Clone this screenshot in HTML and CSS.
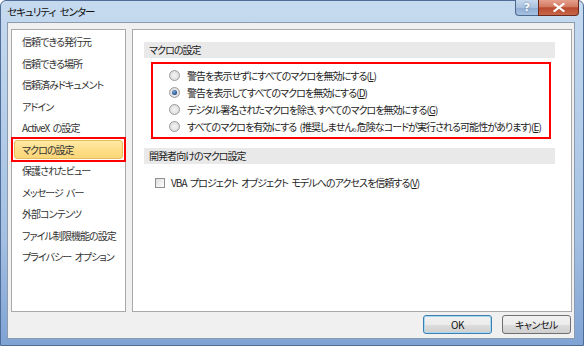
FILE: index.html
```html
<!DOCTYPE html>
<html lang="ja">
<head>
<meta charset="utf-8">
<title>セキュリティ センター</title>
<link rel="stylesheet" href="styles.css">
</head>
<body>
<div class="window">
  <div class="titlebar">
    <span class="title">セキュリティ センター</span>
    <div class="caption-buttons">
      <div class="cap-btn help">?</div>
      <div class="cap-btn close">
        <svg width="12" height="9" viewBox="0 0 12 9"><path d="M1.5 1 L10.5 8 M10.5 1 L1.5 8" stroke="#ffffff" stroke-width="2.2" stroke-linecap="square"/></svg>
      </div>
    </div>
  </div>
  <div class="client">
    <div class="panes">
      <ul class="nav">
        <li class="nav-item">信頼できる発行元</li>
        <li class="nav-item">信頼できる場所</li>
        <li class="nav-item">信頼済みドキュメント</li>
        <li class="nav-item">アドイン</li>
        <li class="nav-item">ActiveX の設定</li>
        <li class="nav-item selected"><span class="sel-bg">マクロの設定</span></li>
        <li class="nav-item">保護されたビュー</li>
        <li class="nav-item">メッセージ バー</li>
        <li class="nav-item">外部コンテンツ</li>
        <li class="nav-item">ファイル制限機能の設定</li>
        <li class="nav-item">プライバシー オプション</li>
      </ul>
      <div class="content">
        <div class="section-header">マクロの設定</div>
        <div class="radio-group">
          <div class="opt"><span class="radio"></span><span>警告を表示せずにすべてのマクロを無効にする(<u>L</u>)</span></div>
          <div class="opt"><span class="radio checked"></span><span>警告を表示してすべてのマクロを無効にする(<u>D</u>)</span></div>
          <div class="opt"><span class="radio"></span><span>デジタル署名されたマクロを除き、すべてのマクロを無効にする(<u>G</u>)</span></div>
          <div class="opt"><span class="radio"></span><span>すべてのマクロを有効にする (推奨しません。危険なコードが実行される可能性があります)(<u>E</u>)</span></div>
        </div>
        <div class="section-header second">開発者向けのマクロ設定</div>
        <div class="check-row"><span class="checkbox"></span><span>VBA プロジェクト オブジェクト モデルへのアクセスを信頼する(<u>V</u>)</span></div>
      </div>
    </div>
    <div class="buttons">
      <div class="btn default">OK</div>
      <div class="btn">キャンセル</div>
    </div>
  </div>
</div>
</body>
</html>
```

FILE: styles.css
```css
* { box-sizing: border-box; }
html, body { margin: 0; padding: 0; }
body {
  width: 584px;
  height: 346px;
  overflow: hidden;
  font-family: "Noto Sans CJK JP", "Noto Sans", sans-serif;
  font-size: 10px;
  letter-spacing: -0.95px;
  word-spacing: 2px;
  font-feature-settings: "palt";
  color: #1e1e1e;
  background: #ffffff;
}
.window {
  width: 584px;
  height: 346px;
  display: flex;
  flex-direction: column;
  background: linear-gradient(180deg, #c6daef 0%, #b7cfea 30%, #a3bfe2 70%, #7fa3d4 100%);
  border: 1px solid #4f6d96;
  border-radius: 6px 6px 0 0;
  padding: 0 8px 6px 6px;
}
.titlebar {
  height: 21px;
  display: flex;
  align-items: flex-start;
  flex-shrink: 0;
}
.title {
  font-size: 10.5px;
  letter-spacing: -1px;
  word-spacing: 3px;
  line-height: 22px;
  color: #111;
}
.caption-buttons {
  margin-left: auto;
  display: flex;
  margin-top: -1px;
  margin-right: -4px;
}
.cap-btn {
  height: 16px;
  display: flex;
  align-items: center;
  justify-content: center;
  border: 1px solid #4d6a8e;
  border-top: none;
  letter-spacing: 0;
}
.help {
  width: 23px;
  border-radius: 0 0 0 4px;
  background: linear-gradient(180deg, #c6d8ec 0%, #a9c2df 50%, #8eabd0 51%, #a6c2e2 100%);
  color: #ffffff;
  font-family: "DejaVu Sans", sans-serif;
  font-weight: bold;
  font-size: 11px;
  text-shadow: 0 0 2px #4a6a94;
  border-right: none;
}
.close {
  width: 41px;
  border-radius: 0 0 4px 0;
  border-color: #6b2a1e;
  background: linear-gradient(180deg, #e6a08d 0%, #d37a62 45%, #b94a2f 52%, #c9684a 100%);
}
.client {
  flex: 1;
  min-height: 0;
  background: #f0f0f0;
  border: 1px solid #8c9bae;
  padding: 6px 2px 0 3px;
  display: flex;
  flex-direction: column;
}
.panes {
  display: flex;
  gap: 6px;
  height: 283px;
}
.nav {
  list-style: none;
  margin: 0;
  width: 115px;
  flex-shrink: 0;
  background: #ffffff;
  border: 1px solid #a9a9a9;
  padding: 1px 0 0 0;
}
.nav-item {
  height: 21.5px;
  line-height: 21.5px;
  padding-left: 10px;
  white-space: nowrap;
  color: #333;
}
.nav-item.selected {
  position: relative;
  padding: 1px 2px;
}
.sel-bg {
  display: block;
  height: 19.5px;
  line-height: 18px;
  padding-left: 7px;
  background: linear-gradient(180deg, #fee9a6 0%, #fddc85 60%, #fbd77a 100%);
  border: 1px solid #e5be5c;
  border-radius: 3px;
}
.nav-item.selected::after {
  content: "";
  position: absolute;
  top: -2px;
  bottom: -2px;
  left: -1px;
  right: -1px;
  border: 2px solid #ff0000;
}
.content {
  flex: 1;
  min-width: 0;
  overflow: hidden;
  background: #ffffff;
  border: 1px solid #a9a9a9;
  padding: 12px 16px 0 11px;
}
.section-header {
  height: 16px;
  line-height: 16px;
  padding-left: 5px;
  background: #e9e9e9;
  color: #222;
}
.section-header.second {
  margin-top: 9px;
}
.radio-group {
  margin: 4px 4px 0 7px;
  height: 77px;
  border: 2px solid #ff0000;
  padding: 3px 0 0 16px;
}
.opt {
  height: 17px;
  display: flex;
  align-items: center;
  gap: 7px;
  white-space: nowrap;
}
.radio {
  width: 11px;
  height: 11px;
  border-radius: 50%;
  border: 1px solid #9a9a9a;
  background: radial-gradient(circle at 50% 50%, #f4f4f4 0%, #e2e2e2 60%, #cfcfcf 100%);
  flex-shrink: 0;
  display: flex;
  align-items: center;
  justify-content: center;
}
.radio.checked::after {
  content: "";
  width: 5px;
  height: 5px;
  border-radius: 50%;
  background: radial-gradient(circle at 40% 35%, #7fa8d8 0%, #2a5a95 60%, #1c3f70 100%);
}
.check-row {
  margin-top: 12px;
  padding-left: 11px;
  height: 13px;
  display: flex;
  align-items: center;
  gap: 6px;
  white-space: nowrap;
}
.checkbox {
  width: 10px;
  height: 10px;
  border: 1px solid #8f8f8f;
  background: linear-gradient(135deg, #dcdcdc 0%, #f2f2f2 60%, #ffffff 100%);
  flex-shrink: 0;
}
.buttons {
  display: flex;
  justify-content: flex-end;
  gap: 10px;
  margin-top: 3px;
  padding-right: 1px;
}
.btn {
  width: 69px;
  height: 19px;
  line-height: 17px;
  text-align: center;
  border: 1px solid #707070;
  border-radius: 3px;
  background: linear-gradient(180deg, #f2f2f2 0%, #ebebeb 50%, #dddddd 51%, #cfcfcf 100%);
  color: #111;
  letter-spacing: -0.5px;
}
.btn.default {
  border-color: #3c7fb1;
  box-shadow: inset 0 0 0 1px #a7d8f2;
}
```
